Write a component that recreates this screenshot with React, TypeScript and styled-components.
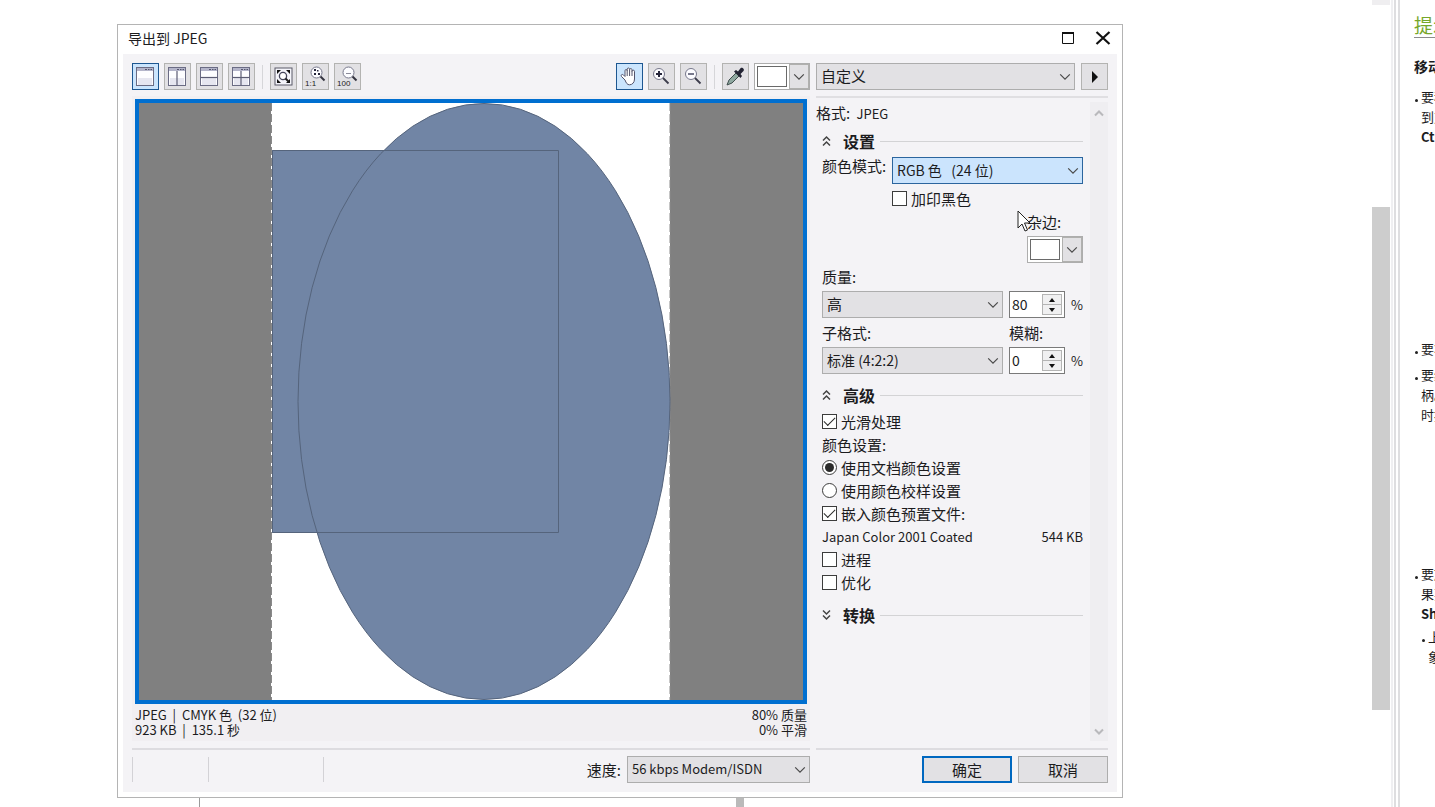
import React from "react";
import styled, { createGlobalStyle, css } from "styled-components";

const GlobalStyle = createGlobalStyle`
  * { box-sizing: border-box; }
  body { margin: 0; background: #fff; }
  body, button, input, select {
    font-family: "Noto Sans CJK SC", "Noto Sans", sans-serif;
    font-size: 15px;
    color: #1c1c1e;
  }
  h1, h2, h3, p, ul { margin: 0; padding: 0; font-weight: 400; }
`;

const Screen = styled.div`
  display: flex;
  min-height: 100vh;
  overflow: hidden;
`;

const Workspace = styled.main`
  flex: 1;
  min-width: 0;
  display: flex;
  flex-direction: column;
  padding: 24px 249px 0 117px;
`;

const PageFoot = styled.div`
  display: flex;
  height: 9px;
  padding-left: 82px;
`;
const PageLine = styled.span`
  width: 1px;
  background: #9a9a9a;
`;
const PageBlock = styled.span`
  width: 8px;
  margin-left: 536px;
  background: #bababa;
`;

const Dialog = styled.section`
  flex: 1;
  display: flex;
  flex-direction: column;
  border: 1px solid #b4b4b4;
  padding: 0 5px 5px;
  background: #fff;
`;

const TitleBar = styled.header`
  display: flex;
  align-items: center;
  justify-content: space-between;
  height: 29px;
  padding: 0 6px 4px 5px;
`;
const Title = styled.h1`
  font-size: 14px;
  line-height: 24px;
`;
const WindowButtons = styled.div`
  display: flex;
  gap: 19px;
`;
const WindowButton = styled.button`
  display: flex;
  width: 16px;
  height: 16px;
  padding: 0;
  border: 0;
  background: none;
`;

const Client = styled.div`
  flex: 1;
  display: grid;
  grid-template-columns: minmax(0, 1fr) 292px;
  grid-template-rows: auto 1fr auto;
  column-gap: 6px;
  padding: 9px;
  background: #f4f3f6;
`;

const Toolbar = styled.div`
  display: flex;
  justify-content: space-between;
  align-items: center;
  height: 27px;
`;
const ToolGroup = styled.div`
  display: flex;
  align-items: center;
  gap: 5px;
`;
const ToolDivider = styled.span`
  width: 1px;
  height: 24px;
  margin: 0 2px;
  background: #d6d6d9;
`;
const ToolButton = styled.button<{ $active?: boolean }>`
  display: flex;
  align-items: center;
  justify-content: center;
  width: 27px;
  height: 27px;
  padding: 0;
  border: 1px solid ${(p) => (p.$active ? "#1d5791" : "#b3b3b1")};
  background: ${(p) => (p.$active ? "#cbe5fd" : "#e2e1e4")};
`;

const Presets = styled.div`
  display: flex;
  gap: 6px;
`;

const SelectBox = styled.div<{ $width?: number }>`
  position: relative;
  ${(p) => (p.$width ? css`flex: 0 0 ${p.$width}px;` : css`flex: 1; min-width: 0;`)}
  height: 27px;
`;
const Select = styled.select<{ $hot?: boolean; $size?: number }>`
  display: block;
  appearance: none;
  width: 100%;
  height: 27px;
  padding: 0 24px 2px 4px;
  border: 1px solid ${(p) => (p.$hot ? "#2b659e" : "#adadad")};
  border-radius: 0;
  background: ${(p) => (p.$hot ? "#cbe4fd" : "#e2e1e4")};
  font-size: ${(p) => p.$size ?? 15}px;
`;
const SelectArrow = styled.span`
  position: absolute;
  top: 0;
  right: 4px;
  bottom: 0;
  display: flex;
  align-items: center;
  pointer-events: none;
`;

const SwatchButton = styled.button`
  display: flex;
  width: 56px;
  height: 27px;
  padding: 0;
  border: 1px solid #adadad;
  background: #fff;
`;
const SwatchColor = styled.span`
  flex: 1;
  margin: 2px;
  border: 1px solid #6a6a6a;
  background: #fff;
`;
const SwatchArrow = styled.span`
  display: flex;
  align-items: center;
  justify-content: center;
  width: 20px;
  height: 25px;
  border: 1px solid #b0b0ae;
  background: #e2e1e4;
`;

const PreviewPane = styled.div`
  display: flex;
  flex-direction: column;
  margin-top: 6px;
  padding: 3px 3px 4px;
  margin-bottom: 7px;
  background: #f1eff2;
`;
const PreviewFrame = styled.div`
  flex: 1;
  display: flex;
  border: 4px solid #006fd0;
  background: #808080;
`;
const PreviewArt = styled.svg`
  display: block;
  width: 100%;
  height: auto;
`;
const InfoBar = styled.div`
  display: flex;
  justify-content: space-between;
  margin-top: 3px;
  font-size: 13px;
  line-height: 15px;
`;
const InfoColumn = styled.p<{ $end?: boolean }>`
  text-align: ${(p) => (p.$end ? "right" : "left")};
  white-space: pre;
`;

const SidePane = styled.div`
  display: flex;
  margin-top: 6px;
  padding-top: 4px;
  border-top: 2px solid #e0dfe2;
  margin-bottom: 7px;
`;
const Options = styled.form`
  flex: 1;
  min-width: 0;
  padding: 0 7px 0 6px;
`;
const Latin = styled.span`
  font-size: 13px;
`;
const FormatLine = styled.p`
  margin-left: -6px;
  line-height: 22px;
  white-space: pre;
`;
const SectionHead = styled.div`
  display: flex;
  align-items: center;
  height: 22px;
  margin: 10px 0 4px;
  ${FormatLine} + & { margin-top: 5px; }
`;
const SectionToggle = styled.button`
  display: flex;
  width: 10px;
  height: 14px;
  padding: 0;
  border: 0;
  background: none;
`;
const SectionTitle = styled.h2`
  margin: 0 5px 0 11px;
  font-size: 16px;
  font-weight: 700;
  line-height: 22px;
`;
const SectionRule = styled.span`
  flex: 1;
  height: 1px;
  background: #d3d3d5;
`;

const Row = styled.div`
  display: flex;
  align-items: center;
  height: 23px;
  line-height: 23px;
`;
const FieldRow = styled.div`
  display: flex;
  align-items: center;
  gap: 6px;
  margin: 3px 0;
`;
const FieldLabel = styled.label`
  white-space: nowrap;
`;
const ModeRow = styled.div`
  display: grid;
  grid-template-columns: 70px minmax(0, 1fr);
  row-gap: 3px;
  padding-top: 1px;
`;
const ModeLabel = styled(FieldLabel)`
  line-height: 18px;
`;
const MatteField = styled.div`
  position: relative;
  display: flex;
  flex-direction: column;
  gap: 3px;
  width: 56px;
  margin: 0 0 2px auto;
  line-height: 23px;
`;
const Pointer = styled.svg`
  position: absolute;
  top: 0;
  left: -10px;
  pointer-events: none;
`;
const BlurLabel = styled(FieldLabel)`
  width: 74px;
  margin-left: auto;
`;

const Check = styled.label`
  display: flex;
  align-items: center;
  gap: 4px;
  height: 23px;
  line-height: 23px;
  white-space: nowrap;
`;
const CheckInput = styled.input`
  appearance: none;
  display: grid;
  place-items: center;
  width: 15px;
  height: 15px;
  margin: 0;
  border: 1px solid #3c3c3c;
  background: #fff;
  &[type="radio"] { border-radius: 50%; }
  &[type="radio"]:checked::after {
    content: "";
    width: 9px;
    height: 9px;
    border-radius: 50%;
    background: #2b2b2b;
  }
  &[type="checkbox"]:checked::after {
    content: "";
    width: 10px;
    height: 5px;
    margin-bottom: 3px;
    border: solid #2b2b2b;
    border-width: 0 0 1px 1px;
    transform: rotate(-45deg);
  }
`;
const ProfileRow = styled(Row)`
  justify-content: space-between;
  font-size: 13px;
`;

const Spinner = styled.div`
  display: flex;
  width: 56px;
  height: 27px;
  padding: 2px;
  border: 1px solid #7a7a7a;
  background: #fff;
`;
const SpinnerInput = styled.input`
  flex: 1;
  width: 0;
  padding: 0 0 1px;
  border: 0;
  font-size: 14px;
`;
const SpinnerButtons = styled.div`
  display: flex;
  flex-direction: column;
  width: 20px;
`;
const SpinnerButton = styled.button`
  flex: 1;
  display: flex;
  align-items: center;
  justify-content: center;
  padding: 0;
  border: 1px solid #b4b4b4;
  background: #f0f0f1;
  & + & { border-top: 0; }
`;
const Unit = styled.span`
  width: 12px;
  font-size: 13px;
`;

const ScrollTrack = styled.div`
  display: flex;
  flex-direction: column;
  align-items: center;
  justify-content: space-between;
  width: 18px;
  padding: 7px 0 5px;
  background: #efeef1;
`;

const Footer = styled.footer`
  display: flex;
  align-items: center;
  justify-content: flex-end;
  gap: 6px;
  padding-top: 6px;
  border-top: 2px solid #dddce0;
`;
const StatusCells = styled.div`
  display: flex;
  flex: 1;
  height: 25px;
`;
const StatusCell = styled.span<{ $width: number }>`
  width: ${(p) => p.$width}px;
  border-left: 1px solid #d3d2d6;
`;
const PushButton = styled.button<{ $primary?: boolean }>`
  width: 90px;
  height: 27px;
  padding: 0;
  border: ${(p) => (p.$primary ? "2px solid #0068c0" : "1px solid #adadad")};
  background: #e2e1e4;
  font-size: 15px;
  line-height: 21px;
`;

const PageScroll = styled.div`
  display: flex;
  flex-direction: column;
  width: 18px;
  border-top: 5px solid #efeef0;
`;
const PageThumb = styled.div`
  height: calc(62vh + 3px);
  margin-top: 25vh;
  background: #cdcdcd;
`;
const Splitter = styled.div`
  width: 9px;
  margin-left: 1px;
  border-left: 2px solid #efeff1;
  border-right: 2px solid #dedee0;
`;
const SplitterLine = styled.div`
  width: 2px;
  height: 100%;
  margin-left: 1px;
  background: #dedee0;
`;

const Tips = styled.aside`
  width: 35px;
  padding: 12px 0 0 14px;
  overflow: hidden;
  white-space: nowrap;
  font-size: 13px;
  line-height: 20px;
`;
const TipsTitle = styled.h2`
  border-bottom: 1px solid #8c8c8c;
  color: #76a72b;
  font-size: 19px;
  line-height: 25px;
`;
const TipsHeading = styled.h3`
  margin: 16px 0 9px;
  font-size: 14px;
  font-weight: 700;
  line-height: 24px;
`;
const TipsList = styled.ul`
  list-style: none;
`;
const Tip = styled.li<{ $after?: number }>`
  position: relative;
  padding-left: 7px;
  margin-bottom: ${(p) => p.$after ?? 0}px;
  &::before {
    content: "";
    position: absolute;
    left: 1px;
    top: 12px;
    width: 3px;
    height: 3px;
    border-radius: 50%;
    background: #222;
  }
`;
const SubTips = styled(TipsList)`
  margin-top: 3px;
`;

function Chevron() {
  return (
    <svg width="12" height="8" viewBox="0 0 12 8" fill="none" stroke="#4a4a4a" strokeWidth="1.2">
      <path d="M1.2 1.4 6 6.2l4.8-4.8" />
    </svg>
  );
}

function WindowIcon({ split }: { split: "none" | "v" | "h" | "both" }) {
  return (
    <svg width="19" height="19" viewBox="0 0 19 19" fill="none">
      <rect x="0.5" y="0.5" width="17" height="18" fill="#fdfdff" stroke="#6b6c84" />
      <path d="M1 1h16v3H1z" fill="#b4b5ca" />
      <path d="M9 2.5h2M12 2.5h1.500M14.500 2.500H16" stroke="#55566e" />
      <path d="M2 11h14v7H2z" fill="#e6e6f0" />
      {(split === "v" || split === "both") && <path d="M9 4v14.500" stroke="#5c5d74" strokeWidth="1.200" />}
      {(split === "h" || split === "both") && <path d="M.5 10.500h17" stroke="#5c5d74" strokeWidth="1.200" />}
    </svg>
  );
}

function FitIcon() {
  return (
    <svg width="19" height="19" viewBox="0 0 19 19" fill="none">
      <rect x="1" y="1" width="17" height="17" fill="#f4f4fa" stroke="#5a5a68" />
      <path d="M3 3h4L3 7zM16 3h-4l4 4zM3 16h4l-4-4zM16 16h-4l4-4z" fill="#111" />
      <circle cx="9" cy="9" r="3.600" fill="#fff" stroke="#44455a" strokeWidth="1.300" />
      <path d="m11.500 11.500 3 3" stroke="#222" strokeWidth="2" />
    </svg>
  );
}

function ZoomIcon({ kind }: { kind: "plus" | "minus" }) {
  return (
    <svg width="19" height="19" viewBox="0 0 19 19" fill="none">
      <circle cx="7" cy="7" r="5.500" fill="#fcfcff" stroke="#77788c" />
      <path d="m11 11 5.500 5.500" stroke="#3c3c4c" strokeWidth="1.800" />
      {kind === "plus" ? (
        <path d="M4 7h6M7 4v6" stroke="#26263c" strokeWidth="2" />
      ) : (
        <path d="M4 7h6" stroke="#77788c" strokeWidth="2" />
      )}
    </svg>
  );
}

function ScaleIcon({ label }: { label: string }) {
  return (
    <svg width="25" height="25" viewBox="0 0 25 25" fill="none">
      <circle cx="13.500" cy="8.500" r="5.500" fill="#fcfcff" stroke="#77788c" />
      <path d="m17.500 12.500 4 4" stroke="#33333f" strokeWidth="2" />
      {label === "1:1" ? (
        <path d="M11 5h2v2h-2zM11 9h2v2h-2zM15 9h2v2h-2zM14 6h1.500v1.500H14z" fill="#26263c" />
      ) : (
        <path d="M11 9.500h5" stroke="#8b8b99" />
      )}
      <text x="2" y="22" fontSize="8" fontFamily="Liberation Sans, sans-serif" fill="#222">{label}</text>
    </svg>
  );
}

function HandIcon() {
  return (
    <svg width="19" height="21" viewBox="0 0 19 21">
      <path
        d="M5 14 1.500 10.500c-1-1.400.6-2.800 1.900-1.600L5 10.500V4.700c0-1.600 2.200-1.600 2.200 0V3.200c0-1.600 2.400-1.600 2.400 0v.5c0-1.600 2.400-1.500 2.400.1v1.500c0-1.500 2.500-1.500 2.500 0V13c0 3.500-2.200 5.800-5 5.800-2.300 0-3.300-1.800-4.500-4.800"
        fill="#fff" stroke="#53546c" strokeWidth="1"
      />
      <path d="M7.200 4.500V10M9.600 3.500V10M12 5v5" stroke="#53546c" />
    </svg>
  );
}

function DropperIcon() {
  return (
    <svg width="21" height="21" viewBox="0 0 21 21">
      <path d="M11 7 4 14l-2 5 5-2 7-7z" fill="#8fa8a0" stroke="#3e4d4c" />
      <path d="m9 5.500 2-1.500 2 1.500 2.500-3.200c1.500-1.500 4.500.8 3 2.800L15.500 8l1.500 2-1.500 2z" fill="#232333" />
    </svg>
  );
}

function DoubleChevron({ down }: { down?: boolean }) {
  return (
    <svg width="10" height="14" viewBox="0 0 10 14" fill="none" stroke="#444" strokeWidth="1.500">
      <path d={down ? "M1 2.500 4.500 6 8 2.500M1 7.500 4.500 11 8 7.500" : "M1 6.500 4.500 3 8 6.500M1 11.500 4.500 8 8 11.500"} />
    </svg>
  );
}

function ScrollArrow({ down }: { down?: boolean }) {
  return (
    <svg width="10" height="8" viewBox="0 0 10 8" fill="none" stroke="#b9b9bc" strokeWidth="2">
      <path d={down ? "M1 1.500 5 5.500l4-4" : "M1 6.500 5 2.500l4 4"} />
    </svg>
  );
}

function DropDown(props: { id?: string; label?: string; value: string; width?: number; hot?: boolean; size?: number }) {
  return (
    <SelectBox $width={props.width}>
      <Select id={props.id} aria-label={props.label} $hot={props.hot} $size={props.size}>
        <option>{props.value}</option>
      </Select>
      <SelectArrow><Chevron /></SelectArrow>
    </SelectBox>
  );
}

function Swatch({ id, label }: { id?: string; label?: string }) {
  return (
    <SwatchButton type="button" id={id} aria-label={label}>
      <SwatchColor />
      <SwatchArrow><Chevron /></SwatchArrow>
    </SwatchButton>
  );
}

function NumberField({ id, label, value }: { id?: string; label?: string; value: string }) {
  return (
    <Spinner>
      <SpinnerInput id={id} aria-label={label} type="text" inputMode="numeric" defaultValue={value} />
      <SpinnerButtons>
        <SpinnerButton type="button" aria-label="增加">
          <svg width="6" height="4"><path d="M0 4 3 0l3 4z" fill="#111" /></svg>
        </SpinnerButton>
        <SpinnerButton type="button" aria-label="减少">
          <svg width="6" height="4"><path d="m0 0 3 4 3-4z" fill="#111" /></svg>
        </SpinnerButton>
      </SpinnerButtons>
    </Spinner>
  );
}

function Section({ title, closed }: { title: string; closed?: boolean }) {
  return (
    <SectionHead>
      <SectionToggle type="button" aria-label={title}><DoubleChevron down={closed} /></SectionToggle>
      <SectionTitle>{title}</SectionTitle>
      <SectionRule />
    </SectionHead>
  );
}

function CheckField(props: { text: string; type?: "checkbox" | "radio"; name?: string; checked?: boolean }) {
  return (
    <Check>
      <CheckInput type={props.type ?? "checkbox"} name={props.name} defaultChecked={props.checked} />
      {props.text}
    </Check>
  );
}

function Preview() {
  return (
    <PreviewArt viewBox="0 0 664 597" role="img" aria-label="预览">
      <rect x="132" width="399" height="597" fill="#fff" />
      <path d="M132.500 0v597M531 0v597" stroke="#8a8a8a" strokeDasharray="8 3" />
      <path d="M133 47h287v383H133z" fill="#7185a5" />
      <ellipse cx="345" cy="298.500" rx="186" ry="298" fill="#7185a5" />
      <path d="M133.500 47.500h286v382h-286z" fill="none" stroke="#55647c" />
      <ellipse cx="345" cy="298.500" rx="186" ry="298" fill="none" stroke="#55647c" />
    </PreviewArt>
  );
}

export default function App() {
  return (
    <Screen>
      <GlobalStyle />
      <Workspace>
        <Dialog role="dialog" aria-label="导出到 JPEG">
          <TitleBar>
            <Title>导出到 JPEG</Title>
            <WindowButtons>
              <WindowButton aria-label="最大化">
                <svg width="16" height="16" fill="none" stroke="#111">
                  <path d="M2.500 2.500h11v11h-11z" />
                  <path d="M2 3h12" strokeWidth="2" />
                </svg>
              </WindowButton>
              <WindowButton aria-label="关闭">
                <svg width="16" height="16" fill="none" stroke="#111" strokeWidth="2.200">
                  <path d="m1.500 2 13 12M14.500 2l-13 12" />
                </svg>
              </WindowButton>
            </WindowButtons>
          </TitleBar>

          <Client>
            <Toolbar>
              <ToolGroup>
                <ToolButton $active aria-label="全屏预览"><WindowIcon split="none" /></ToolButton>
                <ToolButton aria-label="两栏垂直预览"><WindowIcon split="v" /></ToolButton>
                <ToolButton aria-label="两栏水平预览"><WindowIcon split="h" /></ToolButton>
                <ToolButton aria-label="四栏预览"><WindowIcon split="both" /></ToolButton>
                <ToolDivider />
                <ToolButton aria-label="适合窗口"><FitIcon /></ToolButton>
                <ToolButton aria-label="实际大小"><ScaleIcon label="1:1" /></ToolButton>
                <ToolButton aria-label="百分之百"><ScaleIcon label="100" /></ToolButton>
              </ToolGroup>
              <ToolGroup>
                <ToolButton $active aria-label="平移"><HandIcon /></ToolButton>
                <ToolButton aria-label="放大"><ZoomIcon kind="plus" /></ToolButton>
                <ToolButton aria-label="缩小"><ZoomIcon kind="minus" /></ToolButton>
                <ToolDivider />
                <ToolButton aria-label="滴管"><DropperIcon /></ToolButton>
                <Swatch label="颜色" />
              </ToolGroup>
            </Toolbar>
            <Presets>
              <DropDown label="预设" value="自定义" />
              <ToolButton aria-label="更多">
                <svg width="6" height="12"><path d="M0 0v12l6-6z" fill="#111" /></svg>
              </ToolButton>
            </Presets>

            <PreviewPane>
              <PreviewFrame><Preview /></PreviewFrame>
              <InfoBar>
                <InfoColumn>{"JPEG  |  CMYK 色  (32 位)\n923 KB  |  135.1 秒"}</InfoColumn>
                <InfoColumn $end>{"80% 质量\n0% 平滑"}</InfoColumn>
              </InfoBar>
            </PreviewPane>

            <SidePane>
              <Options>
                <FormatLine>格式: <Latin> JPEG</Latin></FormatLine>
                <Section title="设置" />
                <ModeRow>
                  <ModeLabel htmlFor="mode">颜色模式:</ModeLabel>
                  <DropDown id="mode" value={"RGB 色\u00a0\u00a0 (24 位)"} hot size={14} />
                  <span />
                  <CheckField text="加印黑色" />
                </ModeRow>
                <MatteField>
                  <FieldLabel htmlFor="matte">杂边:</FieldLabel>
                  <Swatch id="matte" />
                  <Pointer width="14" height="22" viewBox="0 0 14 22">
                    <path d="M1 1v17l4-4 3 7 2.500-1-3-7H13z" fill="#fff" stroke="#222" />
                  </Pointer>
                </MatteField>
                <Row><FieldLabel htmlFor="quality">质量:</FieldLabel></Row>
                <FieldRow>
                  <DropDown id="quality" value="高" />
                  <NumberField label="质量百分比" value="80" />
                  <Unit>%</Unit>
                </FieldRow>
                <Row>
                  <FieldLabel htmlFor="subformat">子格式:</FieldLabel>
                  <BlurLabel htmlFor="blur">模糊:</BlurLabel>
                </Row>
                <FieldRow>
                  <DropDown id="subformat" value="标准 (4:2:2)" size={14} />
                  <NumberField id="blur" value="0" />
                  <Unit>%</Unit>
                </FieldRow>
                <Section title="高级" />
                <CheckField text="光滑处理" checked />
                <Row>颜色设置:</Row>
                <CheckField type="radio" name="profile" text="使用文档颜色设置" checked />
                <CheckField type="radio" name="profile" text="使用颜色校样设置" />
                <CheckField text="嵌入颜色预置文件:" checked />
                <ProfileRow>
                  <span>Japan Color 2001 Coated</span>
                  <span>544 KB</span>
                </ProfileRow>
                <CheckField text="进程" />
                <CheckField text="优化" />
                <Section title="转换" closed />
              </Options>
              <ScrollTrack>
                <ScrollArrow />
                <ScrollArrow down />
              </ScrollTrack>
            </SidePane>

            <Footer>
              <StatusCells>
                <StatusCell $width={76} />
                <StatusCell $width={115} />
                <StatusCell $width={2} />
              </StatusCells>
              <FieldLabel htmlFor="speed">速度:</FieldLabel>
              <DropDown id="speed" value="56 kbps Modem/ISDN" width={183} size={13} />
            </Footer>
            <Footer>
              <PushButton $primary>确定</PushButton>
              <PushButton>取消</PushButton>
            </Footer>
          </Client>
        </Dialog>
        <PageFoot><PageLine /><PageBlock /></PageFoot>
      </Workspace>

      <PageScroll><PageThumb /></PageScroll>
      <Splitter><SplitterLine /></Splitter>
      <Tips>
        <TipsTitle>提示</TipsTitle>
        <TipsHeading>移动</TipsHeading>
        <TipsList>
          <Tip $after={192}>要移<br />到对<br /><b>Ctrl</b></Tip>
          <Tip $after={6}>要将</Tip>
          <Tip $after={139}>要缩<br />柄。<br />时按</Tip>
          <Tip>
            要旋<br />果要<br /><b>Shift</b>
            <SubTips><Tip>上的<br />象的</Tip></SubTips>
          </Tip>
        </TipsList>
      </Tips>
    </Screen>
  );
}
